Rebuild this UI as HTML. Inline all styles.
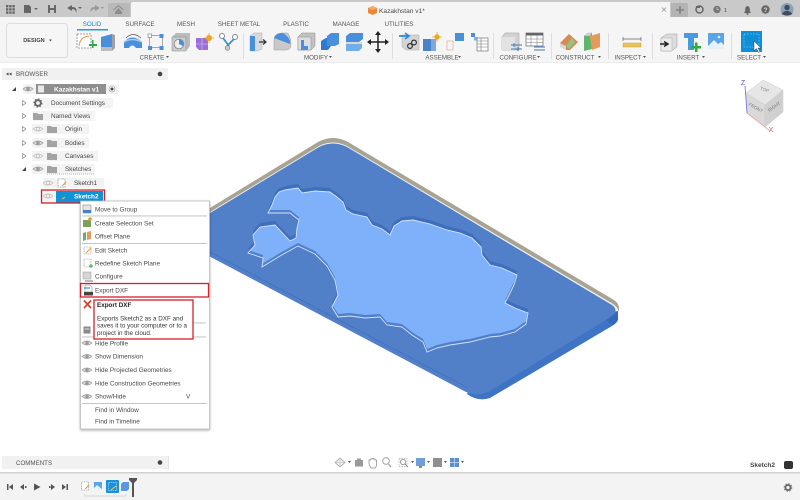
<!DOCTYPE html>
<html><head><meta charset="utf-8"><title>Kazakhstan v1</title>
<style>
html,body{margin:0;padding:0;background:#fff;width:800px;height:500px;overflow:hidden}
svg{display:block;filter:blur(.35px)}
text{font-family:"Liberation Sans",sans-serif;font-size:6.3px;fill:#4a4a4a}
.c{text-anchor:middle}
.m{font-size:6.4px;fill:#484848}
.t{font-size:6.2px;fill:#555}
.b{font-weight:bold}
</style></head><body>
<svg width="800" height="500" viewBox="0 0 800 500" xmlns="http://www.w3.org/2000/svg">
<defs>
<clipPath id="cc"><path id="kz" d="M275 197L279 192L285 190L298 188L302 193L315 191L330 192L337 197L343 202L346 210L353 214L367 217L372 225L382 229L390 235L394 226L402 221L413 220L430 224L447 230L460 233L472 238L481 247L482 255L490 265L502 268L517 275L514 285L508 297L505 303L515 308L528 313L526 324L515 332L500 336L490 337L470 342L450 345L437 348L427 352L423 342L412 335L402 327L387 325L380 317L365 318L350 316L338 317L332 307L338 295L335 280L327 266L315 254L298 246L280 256L262 267L263 258L248 253L255 245L253 235L260 227L275 225L290 241L296 238L297 228L299 220L290 213L268 213L272 205Z"/></clipPath>
<filter id="sh" x="-10%" y="-10%" width="120%" height="120%"><feDropShadow dx="0" dy="1" stdDeviation="1.2" flood-color="#000" flood-opacity=".35"/></filter>
<g id="eye"><path d="M-5 0Q0-4 5 0Q0 4-5 0Z" fill="#d9d9d9" stroke="#9c9c9c" stroke-width=".7"/><circle r="1.7" fill="#9a9a9a"/></g>
<g id="eyef"><path d="M-5 0Q0-4 5 0Q0 4-5 0Z" fill="#f2f2f2" stroke="#bdbdbd" stroke-width=".7"/><circle r="1.7" fill="none" stroke="#bbb" stroke-width=".7"/></g>
<g id="fold"><path d="M-5-3H-1L0-2H5V4H-5Z" fill="#a3a3a3"/></g>
</defs>

<!-- Top bar -->
<rect width="800" height="17" fill="#c9c9c9"/>
<rect x="108" y="3" width="22" height="14" fill="#b9b9b9"/>
<path d="M131 17V4Q131 2 133 2H670V17Z" fill="#f5f5f5"/>
<rect x="671" y="3" width="17" height="14" fill="#b4b4b4"/>
<rect y="17" width="800" height="45" fill="#f5f5f5"/>
<rect y="62" width="800" height="1" fill="#ececec"/>
<g fill="#666">
<rect x="6" y="5" width="2.4" height="2.4"/><rect x="9.2" y="5" width="2.4" height="2.4"/><rect x="12.4" y="5" width="2.4" height="2.4"/>
<rect x="6" y="8.2" width="2.4" height="2.4"/><rect x="9.2" y="8.2" width="2.4" height="2.4"/><rect x="12.4" y="8.2" width="2.4" height="2.4"/>
<rect x="6" y="11.4" width="2.4" height="2.4"/><rect x="9.2" y="11.4" width="2.4" height="2.4"/><rect x="12.4" y="11.4" width="2.4" height="2.4"/>
<path d="M24 5H29L31 7V13H24Z"/><path d="M34 8H38L36 10Z"/>
<path d="M48 5H56V13H48Z"/>
<path d="M72 5L67 8L72 11V9Q76 9 76 13Q78 7 72 7Z"/><path d="M78 7H82L80 9Z"/>
<path d="M115 12L118.500 8L122 12V14H115Z" fill="#8d8d8d"/><path d="M113.500 10L118.500 5.500L123.500 10" fill="none" stroke="#8d8d8d" stroke-width="1"/>
</g>
<g fill="#999"><path d="M95 5L100 8L95 11V9Q91 9 91 13Q89 7 95 7Z"/><path d="M101 7H104L102.500 9Z"/></g>
<rect x="50" y="5" width="4" height="3" fill="#c9c9c9"/><rect x="50" y="10" width="4" height="3" fill="#c9c9c9"/>

<path d="M368 8L372.500 6L377 8V13L372.500 15L368 13Z" fill="#e8883a"/><path d="M368 8L372.500 10L377 8L372.500 6Z" fill="#f3ab6c"/>
<text x="379" y="13" style="font-size:6.6px" fill="#444">Kazakhstan v1*</text>
<path d="M662 7.500L666 11.500M666 7.500L662 11.500" stroke="#999" stroke-width=".8"/>
<path d="M676 10H684M680 6V14" stroke="#777" stroke-width="1.3"/>
<circle cx="699.500" cy="9.500" r="3.500" fill="none" stroke="#666" stroke-width="1.500"/><path d="M696 6H700V8H696Z" fill="#666"/>
<circle cx="717" cy="9.500" r="3.700" fill="#777"/><path d="M717 7V9.500H719" stroke="#ccc" stroke-width=".7" fill="none"/>
<text x="724" y="12" style="font-size:5.5px" fill="#555">1</text>
<path d="M744 13H751L749.800 11V8Q747.500 4 745.200 8V11Z" fill="#666"/><circle cx="747.500" cy="14" r="1" fill="#666"/>
<circle cx="765.500" cy="9.500" r="4.200" fill="#666"/><text x="765.500" y="12" class="c b" style="font-size:6.500px;fill:#ddd">?</text>
<circle cx="787" cy="9.500" r="6.500" fill="#8ea0b5"/><circle cx="787" cy="7.500" r="2.700" fill="#3e4c60"/><path d="M781.500 14Q787 7.500 792.500 14Q787 17 781.500 14Z" fill="#3e4c60"/>

<!-- Tabs -->
<text x="92" y="26" class="t c" style="fill:#1c86c8">SOLID</text>
<rect x="77" y="29" width="31" height="1.500" fill="#2a9ad8"/>
<text x="140" y="26" class="t c">SURFACE</text>
<text x="186" y="26" class="t c">MESH</text>
<text x="239" y="26" class="t c">SHEET METAL</text>
<text x="296" y="26" class="t c">PLASTIC</text>
<text x="346" y="26" class="t c">MANAGE</text>
<text x="399" y="26" class="t c">UTILITIES</text>

<rect x="6.500" y="23.500" width="61" height="34" rx="3" fill="#f6f6f6" stroke="#dcdcdc"/>
<text x="34" y="42" class="c b" style="font-size:5.600px;fill:#444">DESIGN</text><path d="M49 39.500H52L50.500 41.500Z" fill="#555"/>

<!-- Group labels -->
<g>
<text x="152" y="59.500" class="t c">CREATE</text><path d="M166 56H169L167.500 58Z" fill="#555"/>
<text x="316" y="59.500" class="t c">MODIFY</text><path d="M329 56H332L330.500 58Z" fill="#555"/>
<text x="442" y="59.500" class="t c">ASSEMBLE</text><path d="M458 56H461L459.500 58Z" fill="#555"/>
<text x="518" y="59.500" class="t c">CONFIGURE</text><path d="M537 56H540L538.500 58Z" fill="#555"/>
<text x="575" y="59.500" class="t c">CONSTRUCT</text><path d="M598 56H601L599.500 58Z" fill="#555"/>
<text x="628" y="59.500" class="t c">INSPECT</text><path d="M643 56H646L644.500 58Z" fill="#555"/>
<text x="688" y="59.500" class="t c">INSERT</text><path d="M702 56H705L703.500 58Z" fill="#555"/>
<text x="749" y="59.500" class="t c">SELECT</text><path d="M763 56H766L764.500 58Z" fill="#555"/>
</g>
<g fill="#dedede"><rect x="243" y="33" width="1" height="26"/><rect x="392" y="33" width="1" height="26"/><rect x="493" y="33" width="1" height="26"/><rect x="551" y="33" width="1" height="26"/><rect x="608" y="33" width="1" height="26"/><rect x="652" y="33" width="1" height="26"/><rect x="731" y="33" width="1" height="26"/></g>

<!-- CREATE icons -->
<rect x="77" y="34" width="14" height="14" fill="#fff" stroke="#888" stroke-dasharray="2 1" stroke-width=".8"/><path d="M79 46Q80 37 89 36" fill="none" stroke="#e59a48"/>
<path d="M89 44H92V40H93.500V44H97V46H93.500V48H92V46H89Z" fill="#2fa84a"/>
<path d="M101 37L112 34V49L104 51H101Z" fill="#4a8fdc"/><path d="M112 34L115 35V48L112 51Z" fill="#a0a0a0"/><path d="M101 47H112V51H101Z" fill="#bdbdbd"/>
<path d="M124 42Q132 33 142 42V48H136Q132 43 129 48H124Z" fill="#4a8fdc"/><path d="M126 38Q133 31 141 38" fill="none" stroke="#555" stroke-width=".8"/><path d="M124 42Q132 37 142 42" fill="none" stroke="#a6cdf3" stroke-width="1.500"/>
<rect x="149.500" y="35.500" width="13" height="12" fill="none" stroke="#888" stroke-width=".7"/><rect x="148" y="34" width="3.500" height="3.500" fill="#fff" stroke="#777" stroke-width=".6"/><rect x="159.500" y="34" width="4" height="4" fill="#4a8fdc"/><rect x="148" y="46" width="4" height="4" fill="#4a8fdc"/><rect x="159.500" y="46" width="4" height="4" fill="#4a8fdc"/>
<path d="M172 37L176 33H190V46L186 51H172Z" fill="#b9bcbd"/><path d="M172 37H186V51H172Z" fill="#c8cbcc" stroke="#8a8a8a" stroke-width=".5"/><circle cx="179" cy="44" r="4.800" fill="#eee" stroke="#777" stroke-width=".7"/><path d="M179 44V39.500A4.500 4.500 0 0 1 183 46Z" fill="#4a8fdc"/>
<path d="M196 38H208V50H199L196 47Z" fill="#9a6fd8"/><path d="M202 38V50M196 44H208" stroke="#c8aef0" stroke-width=".8"/><circle cx="209" cy="38" r="3" fill="#f0a71f"/><path d="M209 33V43M204 38H214" stroke="#f0a71f" stroke-width=".8"/>
<circle cx="222" cy="36" r="2.500" fill="#fff" stroke="#888"/><circle cx="235" cy="37" r="2.500" fill="#fff" stroke="#888"/><path d="M223 38L229 46M234 39L227 46" stroke="#3c8ed8" stroke-width="1.700"/><circle cx="227.500" cy="48" r="2.300" fill="#ccc" stroke="#777" stroke-width=".7"/>

<!-- MODIFY icons -->
<path d="M250 36L254 33H262V49L257 51H250Z" fill="#d9d9d9" stroke="#aaa" stroke-width=".5"/><path d="M250 36H255V51H250Z" fill="#4a8fdc"/><path d="M259 42H266M263 39.500L266 42L263 44.500" stroke="#333" stroke-width="1.200" fill="none"/>
<path d="M274 50V40Q274 33 282 33H288Q291 38 291 44Q291 50 286 50Z" fill="#c9c9c9" stroke="#9c9c9c" stroke-width=".5"/><path d="M274 38Q276 33 283 33Q291 38 290 44Z" fill="#4a8fdc"/>
<path d="M298 37L302 33H315V46L311 50H298Z" fill="#c2c2c2" stroke="#8d8d8d" stroke-width=".5"/><path d="M298 37H311V50H298Z" fill="#dedede" stroke="#8d8d8d" stroke-width=".5"/><path d="M301 40H308V50H301Z" fill="#4a8fdc"/><path d="M304 40H308V46H304Z" fill="#dedede"/>
<path d="M321 41L326 38H331V46L328 50H321Z" fill="#2f7ad0"/><path d="M327 36L331 33H339V44L335 46H327Z" fill="#4a8fdc"/>
<path d="M346 36L350 33H363V39L359 42H346Z" fill="#4a8fdc"/><path d="M346 42H362V44H346Z" fill="#d8d8d8"/><path d="M346 44H362V48L359 51H346Z" fill="#74aee6"/>
<path d="M378 33V51M369 42H387" stroke="#222" stroke-width="1.500"/><path d="M378 31L375 35H381ZM378 53L375 49H381ZM367 42L371 39V45ZM389 42L385 39V45Z" fill="#222"/>

<!-- ASSEMBLE icons -->
<path d="M402 35H419V50H406L402 47Z" fill="#d4d4d4" stroke="#aaa" stroke-width=".5"/><path d="M399 36H408M405 33L409 36L405 39" stroke="#2a8cdc" stroke-width="1.700" fill="none"/><circle cx="410" cy="46" r="2.400" fill="none" stroke="#333" stroke-width="1.200"/><circle cx="414" cy="42.500" r="2.400" fill="none" stroke="#333" stroke-width="1.200"/>
<path d="M423 39H436V51H423Z" fill="#7ea8d8"/><path d="M423 39H431V51H423Z" fill="#4a82c8"/><circle cx="437" cy="37" r="2.700" fill="#f0a71f"/><path d="M437 32V42M432 37H442" stroke="#f0a71f" stroke-width=".8"/>
<rect x="447" y="41" width="6" height="9" fill="none" stroke="#e2a07a" stroke-width=".6"/><rect x="455" y="33" width="9" height="8" fill="#4a8fdc"/>
<rect x="471" y="33" width="4" height="4" fill="#4a8fdc"/><rect x="474" y="37" width="3.500" height="3.500" fill="#7db3e8"/><rect x="477" y="38" width="11" height="13" fill="#fff" stroke="#777" stroke-width=".7"/><path d="M477 41H488M477 44H488M477 47H488M481 38V51" stroke="#777" stroke-width=".6"/>

<!-- CONFIGURE -->
<path d="M502 37L505 33H519V50H502Z" fill="#d2d2d2" stroke="#999" stroke-width=".5"/><path d="M502 37H515V50H502Z" fill="#e3e3e3"/><path d="M511 45H522M511 49H522" stroke="#3c78b8"/><path d="M514 43V47M518 47V51" stroke="#3c78b8"/>
<rect x="526" y="33" width="17" height="13" fill="#fff" stroke="#666" stroke-width=".7"/><rect x="526" y="33" width="17" height="2.500" fill="#666"/><path d="M526 39H543M526 42.500H543M531 35V46M537 35V46" stroke="#777" stroke-width=".5"/><path d="M534 47H545M534 50H545" stroke="#3c78b8"/>

<!-- CONSTRUCT -->
<path d="M560 43L569 34L578 42L570 50L566 50L560 46Z" fill="#d98a52"/><path d="M566 46L572 38L575 42L569 49Z" fill="#8fc785"/><path d="M560 43L566 46L566 50L560 47Z" fill="#d8d8d8"/>
<path d="M584 36L592 33V49L584 51Z" fill="#5fb56b"/><path d="M590 36L600 33V47L592 50Z" fill="#e59c5a"/><path d="M584 36L588 33H592L590 36Z" fill="#d6d6d6" stroke="#999" stroke-width=".4"/>

<!-- INSPECT -->
<rect x="623" y="43" width="18" height="4" fill="#e9c15a" stroke="#c59127" stroke-width=".4"/><path d="M623 37V41M641 37V41M623 39H641" stroke="#666" stroke-width=".7" fill="none"/>

<!-- INSERT -->
<path d="M661 38L667 34H677V47L671 51H661Z" fill="#dcdcdc" stroke="#999" stroke-width=".5"/><path d="M661 38H672V51H661Z" fill="#ececec" stroke="#aaa" stroke-width=".5"/><path d="M660 44H667M664 41.500L668 44L664 46.500" stroke="#222" stroke-width="1.500" fill="none"/>
<path d="M684 33H698V38H694V50H688V38H684Z" fill="#4a9ae0"/><path d="M691 46H695V42.500H697.500V46H701V48.500H697.500V52H695V48.500H691Z" fill="#2fa84a"/>
<rect x="708" y="33" width="16" height="16" fill="#5aa5e6"/><path d="M708 46L714 40L718 44L721 42L724 45V49H708Z" fill="#e5f1fb"/><circle cx="719" cy="37" r="1.300" fill="#e5f1fb"/>

<!-- SELECT -->
<rect x="741" y="31" width="21" height="21" fill="#0f8fd8"/><rect x="744" y="34" width="15" height="13" fill="none" stroke="#7ec8ee" stroke-width=".7" stroke-dasharray="1.500 1.500"/><path d="M754 41V51L756.500 48.500L758.500 52.500L760 51.500L758 48H761Z" fill="#fff" stroke="#222" stroke-width=".4"/>

<!-- Plate -->
<path d="M205 211L318 142Q333 134 348 142L614 300Q620 304 619 311L600 318L400 300L205 240Z" fill="#a8a393"/>
<path d="M205 215L319 146Q333 139 347 146L613 304Q620 309 618 314L600 318L400 300L205 240Z" fill="#f2f2f2"/>
<path d="M618 311V320Q617 323 612 326L490 398Q478 402 467 394L470 388L612 312Z" fill="#3f74c4"/>
<path d="M205 216L319 147Q333 140 347 147L612 305Q619 310 612 316L490 391Q478 397 466 392L205 254Z" fill="#5180c8"/>
<path d="M205 249.400L468 388" stroke="#3c6eb8" stroke-width=".7" fill="none"/>
<path d="M606 320L618 312V319Q617 322 612 325Z" fill="#3568b8"/>

<!-- Country -->
<use href="#kz" fill="#3d6fbc" transform="translate(0 -4)"/>
<use href="#kz" fill="#5180c8"/>
<g clip-path="url(#cc)"><use href="#kz" fill="#7fb1fb" transform="translate(0 -3)"/></g>
<use href="#kz" fill="none" stroke="#d5e3f8" stroke-width=".9"/>

<!-- ViewCube -->
<path d="M763 80L783 90L765 105L746 93Z" fill="#e6e6e6" stroke="#ccc" stroke-width=".5"/>
<path d="M746 93L765 105L765 127L747 113Z" fill="#d9d9d9" stroke="#ccc" stroke-width=".5"/>
<path d="M783 90L783 112L765 127L765 105Z" fill="#d0d0d0" stroke="#ccc" stroke-width=".5"/>
<text x="764" y="91" class="c" style="font-size:4.500px;fill:#888" transform="rotate(20 764 91)">TOP</text>
<text x="755" y="109" class="c" style="font-size:4.500px;fill:#777" transform="rotate(30 755 109)">FRONT</text>
<text x="775" y="108" class="c" style="font-size:4.500px;fill:#777" transform="rotate(-35 775 108)">RIGHT</text>
<path d="M747 113L745 86" stroke="#6b6bd8" stroke-width=".8"/><path d="M747 113L765 127L770 131" stroke="#e9a3a3" stroke-width=".8"/>
<text x="743" y="85" class="c" style="font-size:7px;fill:#5858cc">Z</text>
<text x="771" y="132" class="c" style="font-size:7px;fill:#d85a6a">X</text>

<!-- Browser -->
<rect x="2" y="68" width="166" height="12" fill="#f1f1f1"/>
<path d="M6 74L8.500 72.500V75.500ZM9 74L11.500 72.500V75.500Z" fill="#444"/>
<text x="16" y="76" class="t">BROWSER</text>
<circle cx="160" cy="74" r="2.300" fill="#444"/>

<rect x="23" y="84" width="96" height="10" fill="#f3f3f3"/>
<rect x="36" y="84" width="70" height="10" fill="#8f8f8f"/>
<path d="M12 91H16V87Z" fill="#444"/>
<use href="#eye" x="28" y="89"/>
<rect x="38" y="85.500" width="6" height="7" fill="#e9e9e9"/>
<text x="54" y="91.500" class="b" style="font-size:6.500px;fill:#fff">Kazakhstan v1</text>
<circle cx="112" cy="89" r="3" fill="#fff" stroke="#999" stroke-width=".6"/><circle cx="112" cy="89" r="1.500" fill="#444"/>

<rect x="33" y="98" width="80" height="10" fill="#f3f3f3"/>
<path d="M22.500 100.500L26 103L22.500 105.500Z" fill="#fff" stroke="#777" stroke-width=".6"/>
<circle cx="38" cy="103" r="2.800" fill="none" stroke="#666" stroke-width="1.800"/><circle cx="38" cy="103" r="4" fill="none" stroke="#666" stroke-width="1" stroke-dasharray="1.500 1.600"/>
<text x="51" y="105" class="m">Document Settings</text>

<rect x="33" y="111" width="62" height="10" fill="#f3f3f3"/>
<path d="M22.500 113.500L26 116L22.500 118.500Z" fill="#fff" stroke="#777" stroke-width=".6"/>
<use href="#fold" x="38" y="116"/>
<text x="51" y="118" class="m">Named Views</text>

<rect x="32" y="124" width="57" height="10" fill="#f3f3f3"/>
<path d="M22.500 126.500L26 129L22.500 131.500Z" fill="#fff" stroke="#777" stroke-width=".6"/>
<use href="#eyef" x="38" y="129"/><use href="#fold" x="52" y="129"/>
<text x="65" y="131" class="m">Origin</text>

<rect x="32" y="138" width="57" height="10" fill="#f3f3f3"/>
<path d="M22.500 140.500L26 143L22.500 145.500Z" fill="#fff" stroke="#777" stroke-width=".6"/>
<use href="#eye" x="38" y="143"/><use href="#fold" x="52" y="143"/>
<text x="65" y="145" class="m">Bodies</text>

<rect x="32" y="151" width="66" height="10" fill="#f3f3f3"/>
<path d="M22.500 153.500L26 156L22.500 158.500Z" fill="#fff" stroke="#777" stroke-width=".6"/>
<use href="#eyef" x="38" y="156"/><use href="#fold" x="52" y="156"/>
<text x="65" y="158" class="m">Canvases</text>

<rect x="32" y="164" width="63" height="10" fill="#f3f3f3"/>
<path d="M22 171H26V167Z" fill="#444"/>
<use href="#eye" x="38" y="169"/><use href="#fold" x="52" y="169"/>
<text x="65" y="171" class="m">Sketches</text>
<path d="M47 174H95" stroke="#777" stroke-width=".6" stroke-dasharray="1 1"/>

<rect x="43" y="178" width="61" height="10" fill="#f3f3f3"/>
<use href="#eyef" x="48" y="183"/>
<rect x="58" y="179" width="7" height="8" fill="#fff" stroke="#777" stroke-width=".6" stroke-dasharray="1.500 .8"/><path d="M62 186L66 182" stroke="#e39a3a"/>
<text x="74" y="185" class="m" style="fill:#3d3d3d">Sketch1</text>

<rect x="42" y="190.500" width="62" height="13" fill="#f3f3f3"/>
<rect x="56" y="191" width="47" height="11.500" fill="#0f93d8"/>
<use href="#eyef" x="48" y="196"/>
<path d="M62 199L65 197" stroke="#e9b04a" stroke-width="1.300"/>
<text x="74" y="198.500" class="b" style="font-size:6.400px;fill:#fff">Sketch2</text>
<rect x="41.500" y="190" width="63" height="13" fill="none" stroke="#d4202a" stroke-width="1.300"/>

<!-- Context menu -->
<rect x="80.500" y="201" width="129" height="228" fill="#fff" stroke="#bdbdbd" stroke-width=".8" filter="url(#sh)"/>
<g fill="#bdbdbd"><rect x="82" y="215.500" width="125" height=".9"/><rect x="82" y="243" width="125" height=".9"/><rect x="193" y="322.500" width="13" height=".9"/><rect x="82" y="336.500" width="124" height=".9"/><rect x="82" y="403" width="125" height=".9"/></g>

<rect x="83" y="205" width="8" height="8" fill="#e5e5e5" stroke="#777" stroke-width=".5"/><rect x="83" y="210" width="8" height="3" fill="#4a7fc4"/>
<text x="95" y="211.500" class="m">Move to Group</text>
<rect x="83" y="220" width="8" height="7" fill="#7da05f"/><circle cx="90" cy="219" r="1.800" fill="#e39a3a"/>
<text x="95" y="225.500" class="m">Create Selection Set</text>
<path d="M83 233L86 232V240L83 241Z" fill="#5fb56b"/><path d="M87 232L91 231V239L87 240Z" fill="#e59c5a"/>
<text x="95" y="238.500" class="m">Offset Plane</text>
<rect x="84" y="247" width="7" height="7" fill="#fff" stroke="#888" stroke-width=".6" stroke-dasharray="1.500 .8"/><path d="M86 253L91 248" stroke="#e39a3a" stroke-width=".9"/>
<text x="95" y="252.500" class="m">Edit Sketch</text>
<rect x="84" y="259" width="7" height="8" fill="#fff" stroke="#888" stroke-width=".6" stroke-dasharray="1.500 .8"/><path d="M89 266H93M91 264V268" stroke="#2fa84a" stroke-width="1.100"/>
<text x="95" y="265.500" class="m">Redefine Sketch Plane</text>
<rect x="83" y="272" width="8" height="7" fill="#d5d5d5" stroke="#999" stroke-width=".5"/><path d="M85 281H93" stroke="#777"/>
<text x="95" y="278.500" class="m">Configure</text>
<path d="M85 285H90L92 287V292H85Z" fill="#fff" stroke="#777" stroke-width=".5"/><path d="M84 288H90" stroke="#3c8ed8" stroke-width="1.200"/><rect x="84" y="292" width="9" height="3.500" fill="#444"/>
<text x="95" y="292.500" class="m">Export DXF</text>
<rect x="80.500" y="283.500" width="128" height="13.500" fill="none" stroke="#d4202a" stroke-width="1.300"/>

<path d="M84 300.500L91 308M91 300.500L84 308" stroke="#d8402c" stroke-width="1.700"/>
<rect x="94" y="300" width="99" height="39" fill="#fff" stroke="#d4202a" stroke-width="1.300"/>
<text x="97" y="307" class="b" style="font-size:6.300px;fill:#222">Export DXF</text>
<text x="97" y="320.500" style="font-size:6.300px;fill:#333">Exports Sketch2 as a DXF and</text>
<text x="97" y="327.500" style="font-size:6.300px;fill:#333">saves it to your computer or to a</text>
<text x="97" y="335" style="font-size:6.300px;fill:#333">project in the cloud.</text>
<rect x="83.500" y="326.500" width="7" height="7" fill="#8a8a8a"/><rect x="84.500" y="328.500" width="5" height="1" fill="#ddd"/>

<use href="#eye" x="87" y="343"/><text x="95" y="345.500" class="m">Hide Profile</text>
<use href="#eye" x="87" y="356.500"/><text x="95" y="358.500" class="m">Show Dimension</text>
<use href="#eye" x="87" y="370"/><text x="95" y="372" class="m">Hide Projected Geometries</text>
<use href="#eye" x="87" y="383"/><text x="95" y="385.500" class="m">Hide Construction Geometries</text>
<use href="#eye" x="87" y="396.500"/><text x="95" y="398.500" class="m">Show/Hide</text>
<text x="186" y="398.500" class="m">V</text>
<text x="95" y="412" class="m">Find in Window</text>
<text x="95" y="423.500" class="m">Find in Timeline</text>

<!-- Comments -->
<rect x="2" y="456" width="166" height="13" fill="#f1f1f1"/><rect x="168" y="456" width="1" height="13" fill="#e2e2e2"/>
<text x="16" y="465" class="t">COMMENTS</text>
<circle cx="160" cy="462.500" r="2.300" fill="#444"/>

<!-- Nav bar -->
<g fill="#9a9a9a">
<path d="M340 458L345 462.500L340 467L335 462.500Z" fill="#eee" stroke="#999" stroke-width=".7"/><path d="M340 458V467M335 462.500H345" stroke="#bbb" stroke-width=".5"/>
<path d="M348 461H351L349.500 463Z" fill="#555"/>
<rect x="355" y="460" width="8" height="6.500" fill="#999"/><rect x="357" y="458.500" width="4" height="2" fill="#999"/>
<path d="M369 464V460H370.500V459H372V458.500H373.500V459H375V460H376.500V466L375 468H371Z" fill="#fff" stroke="#888" stroke-width=".7"/>
<circle cx="386" cy="461" r="3.300" fill="none" stroke="#999" stroke-width=".9"/><path d="M388.500 464L391 467" stroke="#999" stroke-width="1.100"/>
<rect x="399" y="458.500" width="8" height="8" fill="none" stroke="#aaa" stroke-width=".7" stroke-dasharray="1.500 1"/><circle cx="403" cy="462" r="2.600" fill="none" stroke="#888" stroke-width=".8"/><path d="M405 464L408 467" stroke="#888"/>
<path d="M411 461H414L412.500 463Z" fill="#555"/>
<rect x="416" y="458" width="9" height="8" fill="#6f9fd8"/><rect x="419" y="466" width="3" height="2" fill="#888"/>
<path d="M427 461H430L428.500 463Z" fill="#555"/>
<rect x="433" y="458" width="9" height="9" fill="#8f8f8f"/>
<path d="M444 461H447L445.500 463Z" fill="#555"/>
<rect x="450" y="458" width="9" height="9" fill="#5a8fd0"/><path d="M454.500 458V467M450 462.500H459" stroke="#cfe0f4" stroke-width=".7"/>
<path d="M461 461H464L462.500 463Z" fill="#555"/>
</g>
<text x="750" y="467" class="b" style="font-size:6.500px;fill:#444">Sketch2</text>
<rect x="784" y="461" width="9" height="8" rx="2" fill="#333"/>

<!-- Timeline -->
<rect y="472" width="800" height="28" fill="#f3f3f3"/>
<rect y="472" width="800" height="1.500" fill="#d2d2d2"/>
<g fill="#555">
<path d="M7 484H8.500V490H7ZM13 484V490L9 487Z"/>
<path d="M20 487L24 484V490ZM25 486H26.500V488H25Z"/>
<path d="M34 483.500L40.500 487L34 490.500Z"/>
<path d="M49 486H50.500V488H49ZM51 484L55 487L51 490Z"/>
<path d="M62 484L66 487L62 490ZM66.500 484H68V490H66.500Z"/>
</g>
<rect x="81.500" y="482" width="7" height="8" fill="#fff" stroke="#888" stroke-width=".6" stroke-dasharray="1.500 .8"/><path d="M85 489L89 485" stroke="#e39a3a"/>
<rect x="94" y="482" width="8" height="8" fill="#5aa5e6"/><path d="M94 488L97 485L102 489V490H94Z" fill="#e5f1fb"/>
<rect x="106" y="480" width="13" height="13" rx="1" fill="#1a90de"/><rect x="108.500" y="482.500" width="8" height="8" fill="none" stroke="#dff" stroke-width=".5" stroke-dasharray="1.500 .8"/><path d="M111 490L116 486" stroke="#f2c14a" stroke-width="1.100"/>
<path d="M121 484L123 482H129V489L127 491H121Z" fill="#5b97de"/>
<path d="M129 478H137V480L134 483V497H132V483L129 480Z" fill="#555"/>
<path d="M85 494V496H126V494" fill="none" stroke="#ccc" stroke-width=".7"/>
<circle cx="788" cy="487.500" r="2.500" fill="none" stroke="#666" stroke-width="1.700"/><circle cx="788" cy="487.500" r="3.800" fill="none" stroke="#666" stroke-width="1" stroke-dasharray="1.500 1.500"/>
</svg>
</body></html>
